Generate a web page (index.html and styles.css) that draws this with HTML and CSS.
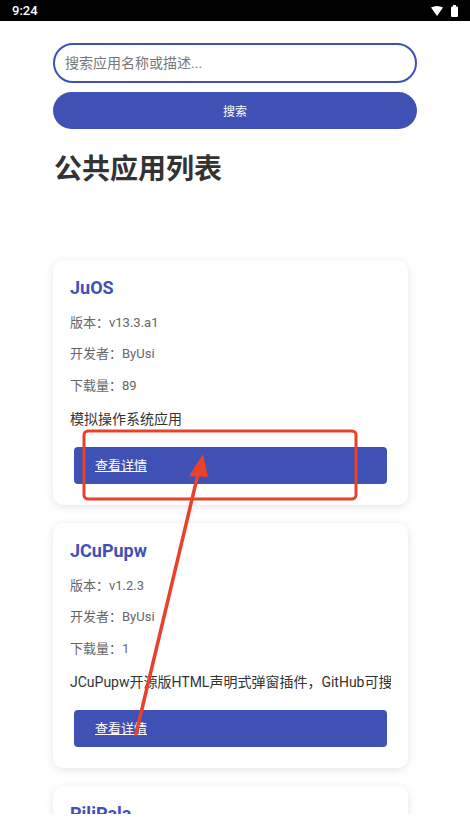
FILE: index.html
```html
<!DOCTYPE html>
<html lang="zh-CN">
<head>
  <meta charset="UTF-8" />
  <title>公共应用列表</title>
  <link rel="stylesheet" href="styles.css">
</head>
<body>

  <div class="statusbar">
    <span class="time">9:24</span>
    <span class="status-icons">
      <svg width="12" height="10" viewBox="0 0 12 10"><path d="M0 1.5 Q6 -1.5 12 1.5 L6 10 Z" fill="#fff"/></svg>
      <svg width="7" height="12" viewBox="0 0 7 12"><rect x="2" y="0" width="3" height="2" fill="#fff"/><rect x="0" y="1.5" width="7" height="10.5" rx="1" fill="#fff"/></svg>
    </span>
  </div>

  <div class="screen">
    <div class="page">
      <form class="search" id="search">
        <input type="text" name="q" placeholder="搜索应用名称或描述..." />
        <button type="submit">搜索</button>
      </form>

      <h2 class="page-title">公共应用列表</h2>

      <div class="app-list">
        <div class="card">
          <h3>JuOS</h3>
          <p class="meta">版本：v13.3.a1</p>
          <p class="meta">开发者：ByUsi</p>
          <p class="meta">下载量：89</p>
          <p class="desc">模拟操作系统应用</p>
          <a class="details" href="#">查看详情</a>
        </div>
        <div class="card">
          <h3>JCuPupw</h3>
          <p class="meta">版本：v1.2.3</p>
          <p class="meta">开发者：ByUsi</p>
          <p class="meta">下载量：1</p>
          <p class="desc">JCuPupw开源版HTML声明式弹窗插件，GitHub可搜</p>
          <a class="details" href="#">查看详情</a>
        </div>
        <div class="card">
          <h3>PiliPala</h3>
          <p class="meta">版本：v1.0.0</p>
          <p class="meta">开发者：ByUsi</p>
        </div>
      </div>
    </div>

    <!-- пометка поверх скриншота -->
    <svg class="markup" width="470" height="816" viewBox="0 0 470 816">
      <rect x="84" y="431" width="272" height="68" rx="4" fill="none" stroke="#e8412c" stroke-width="3"/>
      <line x1="136" y1="734" x2="199" y2="470" stroke="#e8412c" stroke-width="3.5" stroke-linecap="round"/>
      <polygon points="203,454 189,476 208,477" fill="#e8412c"/>
    </svg>
  </div>

  <div class="navbar"></div>

</body>
</html>
```

FILE: styles.css
```css
body {
  margin: 0;
  font-family: Roboto, "Noto Sans CJK SC", sans-serif;
  background: #fff;
  width: 470px;
  height: 837px;
  display: flex;
  flex-direction: column;
  overflow: hidden;
}
.statusbar {
  height: 21px;
  background: #000;
  color: #fff;
  display: flex;
  align-items: center;
  justify-content: space-between;
  padding: 0 12px 0 12px;
  flex-shrink: 0;
}
.time {
  font-size: 13px;
  font-weight: 500;
}
.status-icons {
  display: flex;
  align-items: center;
  gap: 8px;
}
.screen {
  position: relative;
  flex: 1;
  overflow: hidden;
}
.page {
  padding: 22px 53px 0;
}
.search input, .search button {
  display: block;
  width: 364px;
  box-sizing: border-box;
  font-family: inherit;
}
.search input {
  height: 40px;
  border: 2px solid #3f51b5;
  border-radius: 20px;
  padding: 0 10px;
  font-size: 14px;
  color: #333;
  outline: none;
}
.search input::placeholder {
  color: #777;
}
.search button {
  margin-top: 9px;
  height: 37px;
  border: none;
  border-radius: 19px;
  background: #3f51b5;
  color: #fff;
  font-size: 12px;
}
.page-title {
  margin: 23px 0 0 1px;
  font-size: 28px;
  line-height: 36px;
  font-weight: 700;
  color: #333;
}
.app-list {
  margin-top: 72px;
  width: 355px;
  display: flex;
  flex-direction: column;
  gap: 18px;
}
.card {
  background: #fff;
  border-radius: 10px;
  box-shadow: 0 2px 8px rgba(0,0,0,0.1);
  padding: 16px 17px 21px;
}
.card h3 {
  margin: 0;
  font-size: 18px;
  line-height: 24px;
  font-weight: 700;
  color: #3f51b5;
}
.meta {
  margin: 12.5px 0 0;
  font-size: 13px;
  line-height: 19px;
  color: #666;
}
.desc {
  margin: 14.5px 0 0;
  font-size: 14px;
  line-height: 20px;
  color: #333;
  white-space: nowrap;
  overflow: hidden;
}
.details {
  display: block;
  margin: 18px 4px 0;
  height: 37px;
  line-height: 37px;
  padding: 0 21px;
  background: #3f51b5;
  border-radius: 4px;
  color: #fff;
  font-size: 13px;
  text-decoration: underline;
}
.markup {
  position: absolute;
  left: 0;
  top: -21px;
  pointer-events: none;
}
.navbar {
  height: 23px;
  background: #fff;
  flex-shrink: 0;
}
```
